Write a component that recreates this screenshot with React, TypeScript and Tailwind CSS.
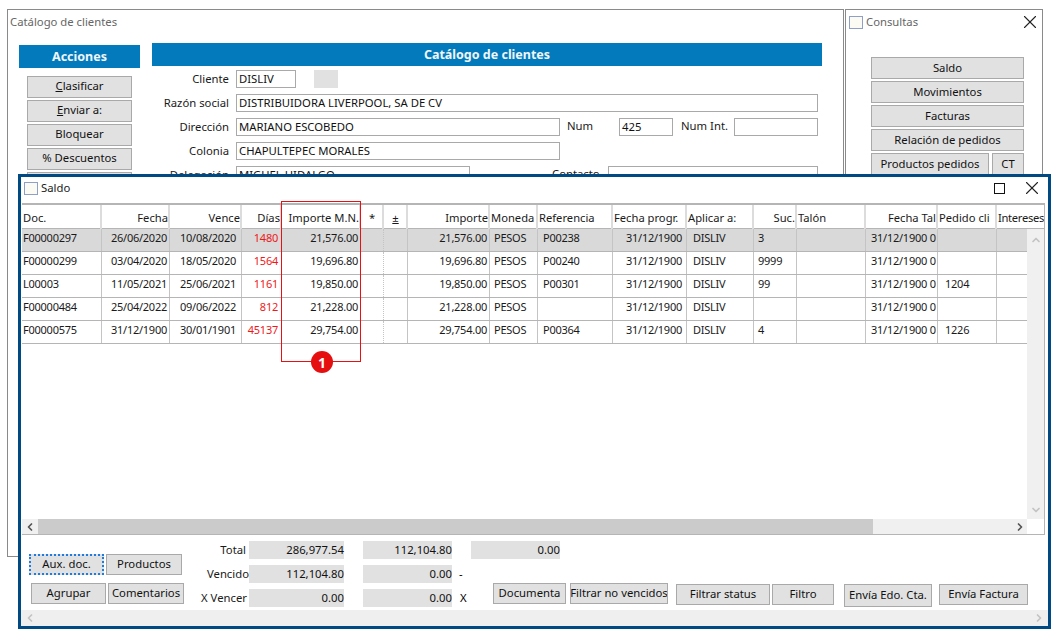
import { X, ChevronLeft, ChevronRight, ChevronUp, ChevronDown } from "lucide-react";

const gridHead = "grid grid-cols-[80px_68px_72px_40px_79px_23px_24px_82px_48px_75px_74px_67px_43px_69px_72px_59px_47px]";
const gridRow = "grid grid-cols-[80px_68px_72px_40px_79px_23px_24px_82px_48px_75px_74px_67px_43px_69px_72px_59px_30px]";

const headers: [string, string][] = [
  ["Doc.", "text-left"],
  ["Fecha", "text-right"],
  ["Vence", "text-right"],
  ["Días", "text-right"],
  ["Importe M.N.", "text-right"],
  ["*", "text-center"],
  ["±", "text-center underline"],
  ["Importe", "text-right"],
  ["Moneda", "text-left"],
  ["Referencia", "text-left"],
  ["Fecha progr.", "text-left"],
  ["Aplicar a:", "text-left"],
  ["Suc.", "text-right"],
  ["Talón", "text-left"],
  ["Fecha Tal", "text-right"],
  ["Pedido cli", "text-left"],
  ["Intereses", "text-left"],
];

const rows = [
  ["F00000297", "26/06/2020", "10/08/2020", "1480", "21,576.00", "21,576.00", "P00238", "3", ""],
  ["F00000299", "03/04/2020", "18/05/2020", "1564", "19,696.80", "19,696.80", "P00240", "9999", ""],
  ["L00003", "11/05/2021", "25/06/2021", "1161", "19,850.00", "19,850.00", "P00301", "99", "1204"],
  ["F00000484", "25/04/2022", "09/06/2022", "812", "21,228.00", "21,228.00", "", "", ""],
  ["F00000575", "31/12/1900", "30/01/1901", "45137", "29,754.00", "29,754.00", "P00364", "4", "1226"],
];

const Btn = ({ label, className = "" }: { label: React.ReactNode; className?: string }) => (
  <div className={`flex items-center justify-center overflow-hidden whitespace-nowrap border border-[#a9a9a9] bg-[#e1e1e1] text-[#111] ${className}`}>
    {label}
  </div>
);

const Field = ({ value, className = "" }: { value?: string; className?: string }) => (
  <div className={`h-[18px] overflow-hidden whitespace-nowrap border border-[#a9a9a9] bg-white pl-[2px] leading-[15px] text-[#111] ${className}`}>
    {value}
  </div>
);

const Label = ({ text, className = "" }: { text: string; className?: string }) => (
  <div className={`pb-[1px] text-right leading-[15px] text-[#1a1a1a] ${className}`}>{text}</div>
);

const Total = ({ value, className = "" }: { value: string; className?: string }) => (
  <div className={`h-[18px] bg-[#e1e1e1] text-right leading-[17px] text-[#111] ${className}`}>{value}</div>
);

const WinIcon = () => <div className="h-[13px] w-[14px] border border-[#8f9fc8] bg-[#fbfbf4]" />;

export default function App() {
  return (
    <div className="relative h-[636px] w-[1057px] overflow-hidden bg-white font-['Noto_Sans','Liberation_Sans',sans-serif] text-[11.3px]">
      {/* ventana principal */}
      <div className="absolute left-[7px] top-[9px] h-[548px] w-[837px] border border-[#8a8a8a] bg-white">
        <div className="pl-[2px] pt-[4px] text-[#666]">Catálogo de clientes</div>
        <div className="mt-[12px] flex">
          <div className="ml-[11px] mt-[2px] w-[121px]">
            <div className="flex h-[23px] items-center justify-center bg-[#027abb] pt-[1px] text-[12.5px] font-bold text-[#f0f6fa]">Acciones</div>
            <div className="ml-[8px] mt-[8px] flex w-[105px] flex-col gap-[2px]">
              <Btn className="h-[22px]" label={<span><u>C</u>lasificar</span>} />
              <Btn className="h-[22px]" label={<span><u>E</u>nviar a:</span>} />
              <Btn className="h-[22px]" label="Bloquear" />
              <Btn className="h-[22px]" label="%  Descuentos" />
              <Btn className="h-[22px]" label="" />
            </div>
          </div>
          <div className="ml-[12px] w-[670px]">
            <div className="flex h-[23px] items-center justify-center bg-[#027abb] pt-[1px] text-[12.5px] font-bold text-[#f0f6fa]">Catálogo de clientes</div>
            <div className="mt-[4px] flex items-center">
              <Label text="Cliente" className="w-[77px]" />
              <Field value="DISLIV" className="ml-[7px] w-[60px]" />
              <div className="ml-[18px] h-[18px] w-[24px] bg-[#e1e1e1]" />
            </div>
            <div className="mt-[6px] flex items-center">
              <Label text="Razón social" className="w-[77px]" />
              <Field value="DISTRIBUIDORA LIVERPOOL, SA DE CV" className="ml-[7px] w-[582px]" />
            </div>
            <div className="mt-[6px] flex items-center">
              <Label text="Dirección" className="w-[77px]" />
              <Field value="MARIANO ESCOBEDO" className="ml-[7px] w-[324px]" />
              <div className="ml-[7px] w-[52px] pb-[1px] text-[#1a1a1a]">Num</div>
              <Field value="425" className="w-[54px]" />
              <div className="ml-[8px] w-[53px] pb-[1px] text-[#1a1a1a]">Num Int.</div>
              <Field className="w-[84px]" />
            </div>
            <div className="mt-[6px] flex items-center">
              <Label text="Colonia" className="w-[77px]" />
              <Field value="CHAPULTEPEC MORALES" className="ml-[7px] w-[324px]" />
            </div>
            <div className="mt-[6px] flex items-center">
              <Label text="Delegación" className="w-[77px]" />
              <Field value="MIGUEL HIDALGO" className="ml-[7px] w-[234px]" />
              <div className="ml-[82px] w-[56px] pb-[1px] text-[#1a1a1a]">Contacto</div>
              <Field className="w-[210px]" />
            </div>
          </div>
        </div>
      </div>

      {/* ventana consultas */}
      <div className="absolute left-[845px] top-[9px] h-[548px] w-[198px] border border-[#8a8a8a] bg-white">
        <div className="flex h-[24px] items-center pl-[3px] pr-[1px]">
          <WinIcon />
          <span className="ml-[3px] text-[#666]">Consultas</span>
          <X className="ml-auto h-[22px] w-[22px] text-[#222]" strokeWidth={1.2} absoluteStrokeWidth />
        </div>
        <div className="ml-[25px] mt-[23px] flex w-[153px] flex-col gap-[2px]">
          <Btn className="h-[22px]" label="Saldo" />
          <Btn className="h-[22px]" label="Movimientos" />
          <Btn className="h-[22px]" label="Facturas" />
          <Btn className="h-[22px]" label="Relación de pedidos" />
          <div className="flex gap-[3px]">
            <Btn className="h-[22px] w-[118px]" label="Productos pedidos" />
            <Btn className="h-[22px] w-[32px]" label="CT" />
          </div>
        </div>
      </div>

      {/* ventana saldo */}
      <div className="absolute left-[18px] top-[174px] flex h-[455px] w-[1033px] flex-col border-[3px] border-[#004a84] bg-white">
        <div className="flex h-[26px] shrink-0 items-center pb-[4px] pl-[3px] pr-[5px]">
          <WinIcon />
          <span className="ml-[3px] text-[#1a1a1a]">Saldo</span>
          <div className="ml-auto h-[11px] w-[11px] border border-[#111]" />
          <X className="ml-[16px] h-[22px] w-[22px] text-[#222]" strokeWidth={1.2} absoluteStrokeWidth />
        </div>

        <div className="relative ml-[1px] h-[332px] w-[1023px] shrink-0 overflow-hidden border-r border-b border-t-2 border-[#b5b5b5]">
          <div className={`${gridHead} h-[24px] border-b border-[#b5b5b5] text-[11.2px]`}>
            {headers.map(([h, align], i) => (
              <div
                key={i}
                className={`whitespace-nowrap pl-[1px] leading-[25px] text-[#1a1a1a] ${align} ${i === headers.length - 1 ? "tracking-[-0.3px]" : "overflow-hidden border-r-2 border-[#dcdcdc]"}`}
              >
                {h}
              </div>
            ))}
          </div>
          {rows.map((r, i) => (
            <div key={r[0]} className={`${gridRow} h-[23px] border-b border-[#b5b5b5] text-[11px] leading-[18px] tracking-[-0.25px] text-[#1a1a1a] ${i === 0 ? "bg-[#d9d9d9]" : ""}`}>
              <div className="border-r border-[#c4c4c4] pl-[1px]">{r[0]}</div>
              <div className="border-r border-[#c4c4c4] pr-[2px] text-right">{r[1]}</div>
              <div className="border-r border-[#c4c4c4] pr-[5px] text-right">{r[2]}</div>
              <div className="border-r border-[#c4c4c4] pr-[3px] text-right text-[#f01818]">{r[3]}</div>
              <div className="border-r border-[#c4c4c4] pr-[2px] text-right">{r[4]}</div>
              <div className="border-r border-dotted border-[#c4c4c4]" />
              <div className="border-r border-[#c4c4c4]" />
              <div className="border-r border-[#c4c4c4] pr-[2px] text-right">{r[5]}</div>
              <div className="border-r border-[#c4c4c4] pl-[4px]">PESOS</div>
              <div className="border-r border-[#c4c4c4] pl-[5px]">{r[6]}</div>
              <div className="border-r border-[#c4c4c4] pr-[4px] text-right">31/12/1900</div>
              <div className="border-r border-[#c4c4c4] pl-[6px]">DISLIV</div>
              <div className="border-r border-[#c4c4c4] pl-[4px]">{r[7]}</div>
              <div className="border-r border-[#c4c4c4]" />
              <div className="overflow-hidden whitespace-nowrap border-r border-[#c4c4c4] pl-[5px]">31/12/1900 0</div>
              <div className="border-r border-[#c4c4c4] pl-[7px]">{r[8]}</div>
              <div />
            </div>
          ))}

          {/* barras de desplazamiento */}
          <div className="absolute bottom-[15px] right-0 top-[24px] flex w-[17px] flex-col items-center justify-between bg-[#f0f0f0] pb-[3px] pt-[5px]">
            <ChevronUp className="h-[12px] w-[12px] text-[#c4c4c4]" strokeWidth={3.5} />
            <ChevronDown className="h-[12px] w-[12px] text-[#c4c4c4]" strokeWidth={3.5} />
          </div>
          <div className="absolute bottom-0 left-0 right-[17px] flex h-[15px] items-center bg-[#f0f0f0]">
            <div className="flex w-[16px] justify-center">
              <ChevronLeft className="h-[12px] w-[12px] text-[#555]" strokeWidth={3.5} />
            </div>
            <div className="h-full w-[835px] bg-[#cbcbcb]" />
            <ChevronRight className="ml-auto mr-[1px] h-[12px] w-[12px] text-[#555]" strokeWidth={3.5} />
          </div>
        </div>

        {/* totales y botones */}
        <div className="flex grow">
          <div className="ml-[8px] mt-[19px] flex w-[156px] flex-col gap-[8px]">
            <div className="flex gap-[2px]">
              <div className="flex h-[21px] w-[75px] items-center justify-center border-2 border-dotted border-[#1c7ce0] bg-[#e1e1e1] text-[#111]">Aux. doc.</div>
              <Btn className="h-[21px] w-[76px]" label="Productos" />
            </div>
            <div className="ml-[2px] flex gap-[2px]">
              <Btn className="h-[21px] w-[75px]" label="Agrupar" />
              <Btn className="h-[21px] w-[76px]" label="Comentarios" />
            </div>
          </div>
          <div className="ml-[2px] mt-[6px] flex flex-col gap-[6px]">
            <div className="flex h-[18px] items-center">
              <Label text="Total" className="w-[62px] pr-[3px]" />
              <Total value="286,977.54" className="w-[95px]" />
              <Total value="112,104.80" className="ml-[19px] w-[89px]" />
              <Total value="0.00" className="ml-[19px] w-[89px]" />
            </div>
            <div className="flex h-[18px] items-center">
              <Label text="Vencido" className="w-[62px] whitespace-nowrap" />
              <Total value="112,104.80" className="w-[95px]" />
              <Total value="0.00" className="ml-[19px] w-[89px]" />
              <span className="ml-[7px]">-</span>
            </div>
            <div className="flex h-[18px] items-center">
              <Label text="X Vencer" className="w-[62px] whitespace-nowrap pr-[2px]" />
              <Total value="0.00" className="w-[95px]" />
              <Total value="0.00" className="ml-[19px] w-[89px]" />
              <span className="ml-[8px]">X</span>
            </div>
          </div>
          <div className="ml-[-67px] mt-[48px] flex items-start">
            <Btn className="h-[21px] w-[73px]" label="Documenta" />
            <Btn className="ml-[4px] h-[21px] w-[98px]" label="Filtrar no vencidos" />
            <Btn className="ml-[8px] mt-[1px] h-[21px] w-[94px]" label="Filtrar status" />
            <Btn className="ml-[2px] mt-[1px] h-[21px] w-[62px]" label="Filtro" />
            <Btn className="ml-[10px] mt-[1px] h-[23px] w-[88px]" label="Envía Edo. Cta." />
            <Btn className="ml-[7px] mt-[1px] h-[21px] w-[89px]" label="Envía Factura" />
          </div>
        </div>
        <div className="flex h-[16px] shrink-0 items-center justify-between bg-[#efefef] px-[3px]">
          <ChevronLeft className="h-[12px] w-[12px] text-[#c4c4c4]" strokeWidth={3.5} />
          <ChevronRight className="h-[12px] w-[12px] text-[#c4c4c4]" strokeWidth={3.5} />
        </div>
      </div>

      {/* anotación */}
      <div className="absolute left-[281px] top-[201px] h-[161px] w-[80px] border border-[#e81010]" />
      <div className="absolute left-[311px] top-[351px] flex h-[22px] w-[22px] items-center justify-center rounded-full bg-[#e60f0f] text-[14px] font-bold text-white">1</div>
    </div>
  );
}
